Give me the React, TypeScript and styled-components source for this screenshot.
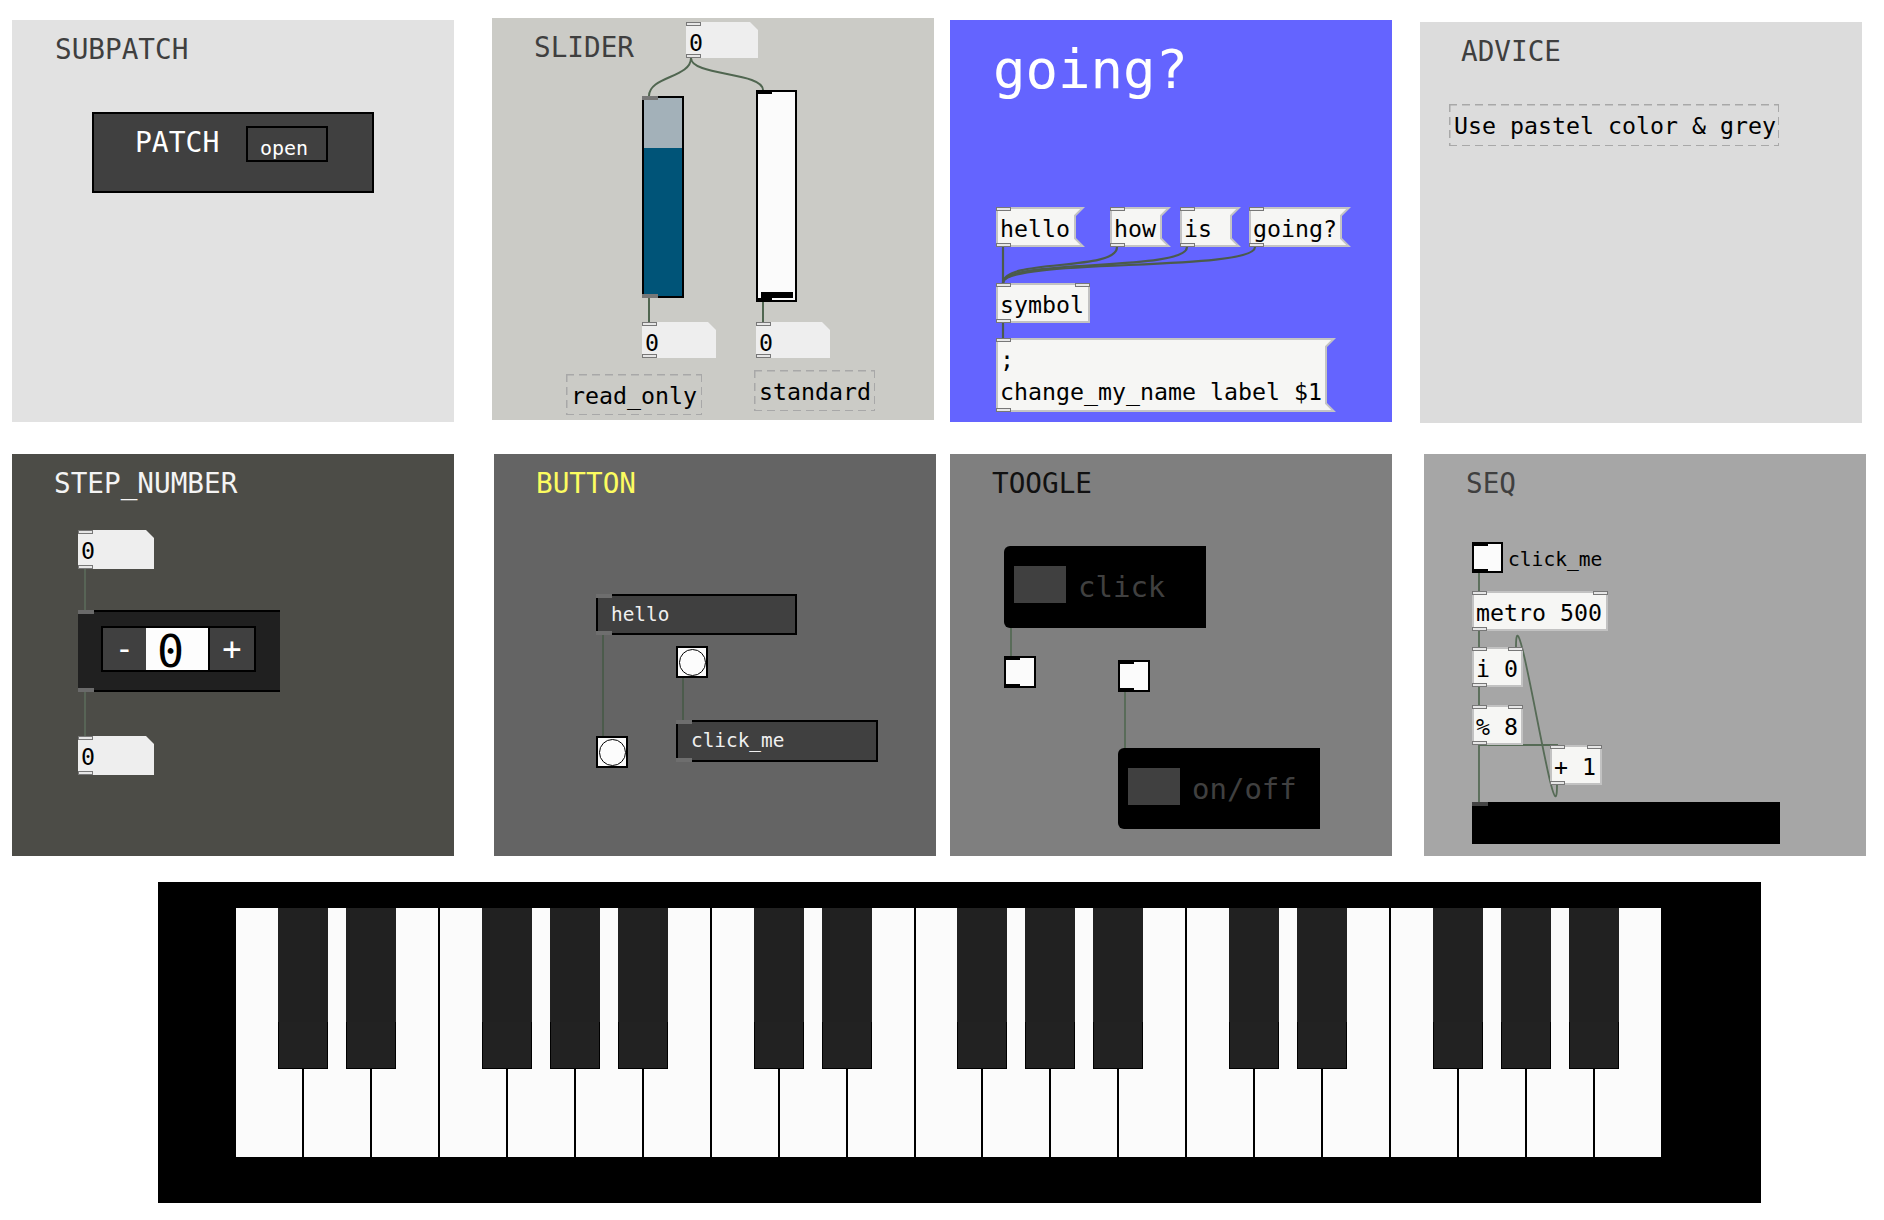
import React from "react";
import styled, { createGlobalStyle, css } from "styled-components";

const MONO = `"DejaVu Sans Mono", "Liberation Mono", monospace`;

const GlobalStyle = createGlobalStyle`
  html, body { margin: 0; padding: 0; background: #ffffff; }
  body { font-family: ${MONO}; }
`;

type Pos = { $x: number; $y: number };

const at = css<Pos>`
  position: absolute;
  left: ${(p) => p.$x}px;
  top: ${(p) => p.$y}px;
`;

const pdText = css`
  font-family: ${MONO};
  font-size: 23.25px;
  line-height: 32px;
  color: #000;
  white-space: pre;
`;

/* ---------- page layout ---------- */

const Page = styled.div`
  width: 1884px;
  height: 1220px;
  overflow: hidden;
  background: #fff;
  display: flex;
  flex-direction: column;
  align-items: flex-start;
`;

const Row = styled.div<{ $mt: number; $h: number }>`
  display: flex;
  align-items: flex-start;
  flex: none;
  margin-top: ${(p) => p.$mt}px;
  height: ${(p) => p.$h}px;
`;

const Canvas = styled.div<{ $bg: string; $ml: number; $mt?: number; $h?: number }>`
  position: relative;
  flex: none;
  width: 442px;
  height: ${(p) => p.$h ?? 402}px;
  margin-left: ${(p) => p.$ml}px;
  margin-top: ${(p) => p.$mt ?? 0}px;
  background: ${(p) => p.$bg};
  overflow: hidden;
`;

const Title = styled.div<{ $x: number; $base: number; $size?: number; $color: string }>`
  position: absolute;
  left: ${(p) => p.$x}px;
  top: ${(p) => p.$base - 0.846 * (p.$size ?? 27.7)}px;
  font-family: ${MONO};
  font-size: ${(p) => p.$size ?? 27.7}px;
  line-height: 1;
  color: ${(p) => p.$color};
  white-space: pre;
`;

/* ---------- wires ---------- */

const Wires = styled.svg`
  position: absolute;
  left: 0;
  top: 0;
  width: 100%;
  height: 100%;
  overflow: visible;
  pointer-events: none;
`;

const Wire = styled.path<{ $w?: number; $c?: string }>`
  fill: none;
  stroke: ${(p) => p.$c ?? "#506650"};
  stroke-width: ${(p) => p.$w ?? 2}px;
`;

/* ---------- ports ---------- */

const Port = styled.span<{ $at: "tl" | "tr" | "bl" }>`
  position: absolute;
  width: 15px;
  height: 4px;
  box-sizing: border-box;
  border: 1px solid #777;
  background: #e6e6e6;
  ${(p) =>
    p.$at === "tl" ? "left:0;top:0;" : p.$at === "tr" ? "right:0;top:0;" : "left:0;bottom:0;"}
`;

const IemPort = styled.span<{ $at: "tl" | "bl"; $c: string }>`
  position: absolute;
  left: 0;
  width: 16px;
  height: 4px;
  background: ${(p) => p.$c};
  ${(p) => (p.$at === "tl" ? "top:0;" : "bottom:0;")}
`;

/* ---------- pd boxes ---------- */

const ObjBox = styled.div<Pos & { $w: number; $h?: number }>`
  ${at};
  width: ${(p) => p.$w}px;
  height: ${(p) => p.$h ?? 40}px;
  box-sizing: border-box;
  background: #f6f6f4;
  box-shadow: inset 0 0 0 2px #c2c2c2;
  padding: 5.5px 0 0 4px;
  ${pdText};
`;

const NumBox = styled.div<Pos & { $w: number; $h: number }>`
  ${at};
  width: ${(p) => p.$w}px;
  height: ${(p) => p.$h}px;
  box-sizing: border-box;
  background: #eeeeee;
  clip-path: polygon(0 0, calc(100% - 8px) 0, 100% 8px, 100% 100%, 0 100%);
  padding: 5px 0 0 3px;
  ${pdText};
`;

const MsgNode = styled.div<Pos & { $w: number; $h: number }>`
  ${at};
  width: ${(p) => p.$w}px;
  height: ${(p) => p.$h}px;
`;

const MsgEdge = styled.div`
  position: absolute;
  inset: 0;
  background: #c4c4c4;
  clip-path: polygon(
    0 0,
    100% 0,
    calc(100% - 9px) 9px,
    calc(100% - 9px) calc(100% - 9px),
    100% 100%,
    0 100%
  );
`;

const MsgFill = styled.div`
  position: absolute;
  inset: 2px;
  background: #f6f6f4;
  clip-path: polygon(
    0 0,
    calc(100% - 2.8px) 0,
    calc(100% - 9px) 6.2px,
    calc(100% - 9px) calc(100% - 6.2px),
    calc(100% - 2.8px) 100%,
    0 100%
  );
`;

const MsgText = styled.div`
  position: relative;
  padding: 5.5px 0 0 4px;
  ${pdText};
`;

const Comment = styled.div<Pos & { $w: number; $h: number }>`
  ${at};
  width: ${(p) => p.$w}px;
  height: ${(p) => p.$h}px;
  box-sizing: border-box;
  padding: 5.5px 0 0 5px;
  ${pdText};
  background-image: repeating-linear-gradient(90deg, #a8a8a8 0 8px, transparent 8px 13px),
    repeating-linear-gradient(90deg, #a8a8a8 0 8px, transparent 8px 13px),
    repeating-linear-gradient(180deg, #a8a8a8 0 8px, transparent 8px 13px),
    repeating-linear-gradient(180deg, #a8a8a8 0 8px, transparent 8px 13px);
  background-size: 100% 1.5px, 100% 1.5px, 1.5px 100%, 1.5px 100%;
  background-position: 0 0, 0 100%, 0 0, 100% 0;
  background-repeat: no-repeat;
`;

/* ---------- subpatch ---------- */

const GraphBox = styled.div<Pos>`
  ${at};
  width: 282px;
  height: 81px;
  box-sizing: border-box;
  background: #404040;
  box-shadow: inset 0 0 0 2px #000;
  display: flex;
  align-items: flex-start;
  padding-left: 43px;
`;

const GraphTitle = styled.span`
  margin-top: 17.3px;
  font-family: ${MONO};
  font-size: 28px;
  line-height: 1;
  color: #fff;
`;

const OpenBox = styled.span`
  margin-left: 26.7px;
  margin-top: 14px;
  width: 82px;
  height: 36px;
  box-sizing: border-box;
  background: #404040;
  box-shadow: inset 0 0 0 2px #000;
  padding: 12px 0 0 14px;
  font-family: ${MONO};
  font-size: 20px;
  line-height: 1;
  color: #fff;
`;

/* ---------- sliders ---------- */

const ReadSlider = styled.div<Pos>`
  ${at};
  width: 42px;
  height: 202px;
  background: linear-gradient(#a3b1b9 0 52px, #005478 52px);
  box-shadow: inset 0 0 0 2px #000;
`;

const StdSlider = styled.div<Pos>`
  ${at};
  width: 41px;
  height: 212px;
  background: #fbfbfb;
  box-shadow: inset 0 0 0 2px #000;
`;

const SliderKnob = styled.span`
  position: absolute;
  left: 5px;
  right: 4px;
  bottom: 4px;
  height: 6px;
  background: #000;
`;

/* ---------- step number ---------- */

const StepBox = styled.div<Pos>`
  ${at};
  width: 202px;
  height: 82px;
  box-sizing: border-box;
  background: #202020;
  box-shadow: inset 0 2px 0 #000, inset 0 -2px 0 #000;
  padding: 16px 0 0 23px;
`;

const StepGroup = styled.div`
  display: flex;
  height: 46px;
  box-sizing: border-box;
  border: 2px solid #000;
  width: fit-content;
`;

const StepBtn = styled.div<{ $w: number; $edge?: boolean }>`
  width: ${(p) => p.$w}px;
  box-sizing: border-box;
  background: #404040;
  ${(p) => (p.$edge ? "border-left: 2px solid #000;" : "")}
  display: flex;
  align-items: center;
  justify-content: center;
  font-family: ${MONO};
  font-size: 32px;
  line-height: 1;
  color: #fff;
`;

const StepValue = styled.div`
  width: 62px;
  background: #fdfdfd;
  padding: 1px 0 0 11px;
  box-sizing: border-box;
  font-family: ${MONO};
  font-size: 45px;
  line-height: 1;
  color: #000;
`;

/* ---------- buttons / toggles ---------- */

const LabelBox = styled.div<Pos & { $w: number; $h: number }>`
  ${at};
  width: ${(p) => p.$w}px;
  height: ${(p) => p.$h}px;
  box-sizing: border-box;
  background: #404040;
  box-shadow: inset 0 0 0 2px #000;
  padding: 10.6px 0 0 15px;
  font-family: ${MONO};
  font-size: 19.4px;
  line-height: 1;
  color: #f0f0f0;
  white-space: pre;
`;

const Bang = styled.div<Pos>`
  ${at};
  width: 32px;
  height: 32px;
  background: #fcfcfc;
  box-shadow: inset 0 0 0 2px #000;
  display: flex;
  align-items: center;
  justify-content: center;
`;

const BangCircle = styled.span`
  width: 27px;
  height: 27px;
  box-sizing: border-box;
  border-radius: 50%;
  border: 1.6px solid #000;
  background: #fcfcfc;
`;

const Toggle = styled.div<Pos & { $s?: number }>`
  ${at};
  width: ${(p) => p.$s ?? 32}px;
  height: ${(p) => p.$s ?? 32}px;
  background: #fbfbfb;
  box-shadow: inset 0 0 0 2px #000;
`;

const SwitchBox = styled.div<Pos & { $h: number }>`
  ${at};
  width: 202px;
  height: ${(p) => p.$h}px;
  box-sizing: border-box;
  background: #000;
  border-radius: 6px 0 0 6px;
  display: flex;
  align-items: flex-start;
  padding: 20px 0 0 10px;
`;

const SwitchSquare = styled.span`
  width: 52px;
  height: 37px;
  background: #404040;
  flex: none;
`;

const SwitchText = styled.span`
  margin-left: 12px;
  margin-top: 6.5px;
  font-family: ${MONO};
  font-size: 29px;
  line-height: 1;
  color: #404040;
`;

const BlackBar = styled.div<Pos>`
  ${at};
  width: 308px;
  height: 42px;
  background: #000;
`;

/* ---------- keyboard ---------- */

const KeyboardFrame = styled.div`
  flex: none;
  margin-top: 26px;
  margin-left: 158px;
  width: 1603px;
  height: 321px;
  box-sizing: border-box;
  background: #000;
  padding: 26px 98px 46px 78px;
`;

const Keys = styled.div`
  position: relative;
  display: flex;
  height: 249px;
`;

const WhiteKey = styled.div`
  flex: 1 1 0;
  background: #fbfbfb;
  box-shadow: inset -2px 0 0 #000;
  &:last-of-type {
    box-shadow: none;
  }
`;

const BlackKey = styled.div<{ $x: number }>`
  position: absolute;
  top: 0;
  left: ${(p) => p.$x}px;
  width: 50px;
  height: 161px;
  background: #212121;
`;

const BlackKeyTip = styled.span`
  position: absolute;
  left: 0;
  right: 0;
  bottom: 0;
  height: 47px;
  box-sizing: border-box;
  border: 1.5px solid #000;
  border-top: none;
  background: #222;
`;

/* ---------- panels ---------- */

const LABEL_GREY = "#3f3f3f";

function SubpatchPanel() {
  return (
    <Canvas $bg="#e2e2e2" $ml={12} $mt={2}>
      <Title $x={43} $base={39} $color={LABEL_GREY}>SUBPATCH</Title>
      <GraphBox $x={80} $y={92}>
        <GraphTitle>PATCH</GraphTitle>
        <OpenBox>open</OpenBox>
      </GraphBox>
    </Canvas>
  );
}

function SliderPanel() {
  return (
    <Canvas $bg="#cbcbc6" $ml={38} $mt={0}>
      <Title $x={42} $base={39} $color={LABEL_GREY}>SLIDER</Title>
      <Wires>
        <Wire d="M 199 40 C 199 60, 157 58, 157 78" />
        <Wire d="M 199 40 C 199 58, 271 54, 271 72" />
        <Wire d="M 157 280 L 157 304" />
        <Wire d="M 271 284 L 271 304" />
      </Wires>
      <NumBox $x={194} $y={4} $w={72} $h={36}>
        0<Port $at="tl" /><Port $at="bl" />
      </NumBox>
      <ReadSlider $x={150} $y={78}>
        <IemPort $at="tl" $c="#777" />
        <IemPort $at="bl" $c="#777" />
      </ReadSlider>
      <StdSlider $x={264} $y={72}>
        <SliderKnob />
        <IemPort $at="tl" $c="#000" />
        <IemPort $at="bl" $c="#000" />
      </StdSlider>
      <NumBox $x={150} $y={304} $w={74} $h={36}>
        0<Port $at="tl" /><Port $at="bl" />
      </NumBox>
      <NumBox $x={264} $y={304} $w={74} $h={36}>
        0<Port $at="tl" /><Port $at="bl" />
      </NumBox>
      <Comment $x={74} $y={356} $w={136} $h={41}>read_only</Comment>
      <Comment $x={262} $y={352} $w={121} $h={41}>standard</Comment>
    </Canvas>
  );
}

function Msg({ x, y, w, h, text }: { x: number; y: number; w: number; h: number; text: string }) {
  return (
    <MsgNode $x={x} $y={y} $w={w} $h={h}>
      <MsgEdge />
      <MsgFill />
      <MsgText>{text}</MsgText>
      <Port $at="tl" />
      <Port $at="bl" />
    </MsgNode>
  );
}

function NamePanel() {
  const c = "#4b5b4b";
  return (
    <Canvas $bg="#6464ff" $ml={16} $mt={2}>
      <Title $x={43} $base={69} $size={54} $color="#ffffff">going?</Title>
      <Wires>
        <Wire $c={c} $w={2.2} d="M 53 227 L 53 263" />
        <Wire $c={c} $w={2.2} d="M 167 227 C 167 252, 53 238, 53 263" />
        <Wire $c={c} $w={2.2} d="M 237 227 C 237 252, 53 238, 53 263" />
        <Wire $c={c} $w={2.2} d="M 305 227 C 305 252, 53 238, 53 263" />
        <Wire $c={c} $w={2.2} d="M 53 303 L 53 318" />
      </Wires>
      <Msg x={46} y={187} w={89} h={40} text="hello" />
      <Msg x={160} y={187} w={61} h={40} text="how" />
      <Msg x={230} y={187} w={61} h={40} text="is" />
      <Msg x={299} y={187} w={102} h={40} text="going?" />
      <ObjBox $x={46} $y={263} $w={94}>
        symbol<Port $at="tl" /><Port $at="tr" /><Port $at="bl" />
      </ObjBox>
      <Msg x={46} y={318} w={340} h={74} text={";\nchange_my_name label $1"} />
    </Canvas>
  );
}

function AdvicePanel() {
  return (
    <Canvas $bg="#dcdcdc" $ml={28} $mt={4} $h={401}>
      <Title $x={41} $base={39} $color={LABEL_GREY}>ADVICE</Title>
      <Comment $x={29} $y={82} $w={330} $h={42}>Use pastel color &amp; grey</Comment>
    </Canvas>
  );
}

function StepPanel() {
  const c = "#5d6f5d";
  return (
    <Canvas $bg="#4c4c47" $ml={12}>
      <Title $x={42} $base={39} $color="#f4f4f4">STEP_NUMBER</Title>
      <Wires>
        <Wire $c={c} $w={1.4} d="M 73 115 L 73 156" />
        <Wire $c={c} $w={1.4} d="M 73 238 L 73 282" />
      </Wires>
      <NumBox $x={66} $y={76} $w={76} $h={39}>
        0<Port $at="tl" /><Port $at="bl" />
      </NumBox>
      <StepBox $x={66} $y={156}>
        <StepGroup>
          <StepBtn $w={43}>-</StepBtn>
          <StepValue>0</StepValue>
          <StepBtn $w={46} $edge>+</StepBtn>
        </StepGroup>
        <IemPort $at="tl" $c="#6a6a6a" />
        <IemPort $at="bl" $c="#6a6a6a" />
      </StepBox>
      <NumBox $x={66} $y={282} $w={76} $h={39}>
        0<Port $at="tl" /><Port $at="bl" />
      </NumBox>
    </Canvas>
  );
}

function ButtonPanel() {
  const c = "#3f573f";
  return (
    <Canvas $bg="#646464" $ml={40}>
      <Title $x={42} $base={39} $color="#fcfc60">BUTTON</Title>
      <Wires>
        <Wire $c={c} $w={1.3} d="M 109 181 L 109 282" />
        <Wire $c={c} $w={1.3} d="M 189 224 L 189 266" />
      </Wires>
      <LabelBox $x={102} $y={140} $w={201} $h={41}>
        hello
        <IemPort $at="tl" $c="#6e6e6e" />
        <IemPort $at="bl" $c="#6e6e6e" />
      </LabelBox>
      <Bang $x={182} $y={192}>
        <BangCircle />
      </Bang>
      <Bang $x={102} $y={282}>
        <BangCircle />
      </Bang>
      <LabelBox $x={182} $y={266} $w={202} $h={42}>
        click_me
        <IemPort $at="tl" $c="#6e6e6e" />
        <IemPort $at="bl" $c="#6e6e6e" />
      </LabelBox>
    </Canvas>
  );
}

function TogglePanel() {
  const c = "#4c664c";
  return (
    <Canvas $bg="#7f7f7f" $ml={14}>
      <Title $x={42} $base={39} $color="#111111">TOOGLE</Title>
      <Wires>
        <Wire $c={c} $w={1.5} d="M 61 174 L 61 202" />
        <Wire $c={c} $w={1.5} d="M 175 238 L 175 294" />
      </Wires>
      <SwitchBox $x={54} $y={92} $h={82}>
        <SwitchSquare />
        <SwitchText>click</SwitchText>
      </SwitchBox>
      <Toggle $x={54} $y={202}>
        <IemPort $at="tl" $c="#000" />
        <IemPort $at="bl" $c="#000" />
      </Toggle>
      <Toggle $x={168} $y={206}>
        <IemPort $at="tl" $c="#000" />
        <IemPort $at="bl" $c="#000" />
      </Toggle>
      <SwitchBox $x={168} $y={294} $h={81}>
        <SwitchSquare />
        <SwitchText>on/off</SwitchText>
      </SwitchBox>
    </Canvas>
  );
}

function SeqPanel() {
  const c = "#566b56";
  return (
    <Canvas $bg="#a6a6a6" $ml={32}>
      <Title $x={42} $base={39} $color={LABEL_GREY}>SEQ</Title>
      <Title $x={84} $base={113} $size={19.6} $color="#000">click_me</Title>
      <Wires>
        <Wire $c={c} $w={1.8} d="M 55 119 L 55 137" />
        <Wire $c={c} $w={1.8} d="M 55 177 L 55 193" />
        <Wire $c={c} $w={1.8} d="M 55 233 L 55 251" />
        <Wire $c={c} $w={1.8} d="M 55 291 L 55 348" />
        <Wire $c={c} $w={1.8} d="M 55 291 L 134 291" />
        <Wire $c={c} $w={1.8} d="M 133 331 C 133 401, 92 123, 92 193" />
      </Wires>
      <Toggle $x={48} $y={88} $s={31}>
        <IemPort $at="tl" $c="#000" />
        <IemPort $at="bl" $c="#000" />
      </Toggle>
      <ObjBox $x={48} $y={137} $w={136}>
        metro 500<Port $at="tl" /><Port $at="tr" /><Port $at="bl" />
      </ObjBox>
      <ObjBox $x={48} $y={193} $w={51}>
        i 0<Port $at="tl" /><Port $at="tr" /><Port $at="bl" />
      </ObjBox>
      <ObjBox $x={48} $y={251} $w={51}>
        % 8<Port $at="tl" /><Port $at="tr" /><Port $at="bl" />
      </ObjBox>
      <ObjBox $x={126} $y={291} $w={52}>
        + 1<Port $at="tl" /><Port $at="tr" /><Port $at="bl" />
      </ObjBox>
      <BlackBar $x={48} $y={348}>
        <IemPort $at="tl" $c="#444" />
      </BlackBar>
    </Canvas>
  );
}

function Keyboard() {
  const keyW = 1427 / 21;
  const whites = Array.from({ length: 21 }, (_, i) => i);
  const blacks: number[] = [];
  for (let o = 0; o < 3; o++) {
    for (const k of [0, 1, 3, 4, 5]) blacks.push(o * 7 + k);
  }
  return (
    <KeyboardFrame>
      <Keys>
        {whites.map((i) => (
          <WhiteKey key={i} />
        ))}
        {blacks.map((i) => (
          <BlackKey key={`b${i}`} $x={Math.round((i + 1) * keyW - 26)}>
            <BlackKeyTip />
          </BlackKey>
        ))}
      </Keys>
    </KeyboardFrame>
  );
}

export default function App() {
  return (
    <>
      <GlobalStyle />
      <Page>
        <Row $mt={18} $h={406}>
          <SubpatchPanel />
          <SliderPanel />
          <NamePanel />
          <AdvicePanel />
        </Row>
        <Row $mt={30} $h={402}>
          <StepPanel />
          <ButtonPanel />
          <TogglePanel />
          <SeqPanel />
        </Row>
        <Keyboard />
      </Page>
    </>
  );
}
